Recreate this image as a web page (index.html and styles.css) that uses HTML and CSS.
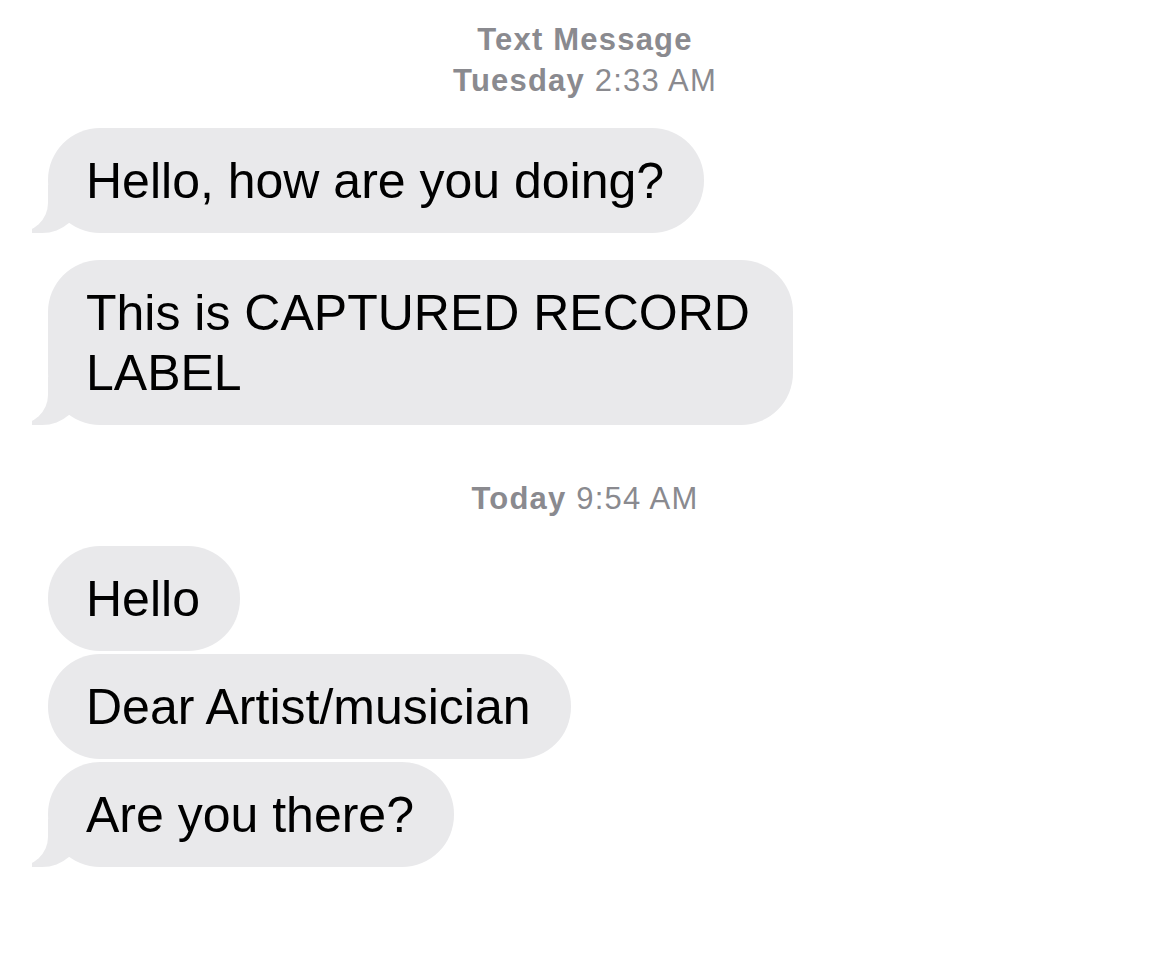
FILE: index.html
```html
<!DOCTYPE html>
<html lang="en">
<head>
    <meta charset="UTF-8">
    <meta name="viewport" content="width=device-width, initial-scale=1.0">
    <title>Text Message</title>
    <link rel="stylesheet" href="styles.css">
</head>
<body>
    <div class="thread">
        <div class="stamp">
            <div class="stamp-title">Text Message</div>
            <div><b>Tuesday</b> 2:33 AM</div>
        </div>

        <div class="group">
            <div class="bubble tail">Hello, how are you doing?</div>
        </div>
        <div class="group">
            <div class="bubble tail">This is CAPTURED RECORD LABEL</div>
        </div>

        <div class="stamp stamp-today">
            <div><b>Today</b> 9:54 AM</div>
        </div>

        <div class="group">
            <div class="bubble">Hello</div>
            <div class="bubble">Dear Artist/musician</div>
            <div class="bubble tail">Are you there?</div>
        </div>
    </div>
</body>
</html>
```

FILE: styles.css
```css
body {
    margin: 0;
    background-color: #fff;
    font-family: "Liberation Sans", Arial, sans-serif;
    color: #000;
}
.thread {
    padding: 19px 0 60px 48px;
}
.stamp {
    text-align: center;
    margin-left: -48px;
    font-size: 31px;
    line-height: 41px;
    letter-spacing: 1.2px;
    color: #8a8a8f;
}
.stamp b,
.stamp-title {
    font-weight: bold;
}
.stamp-today {
    margin-top: 53px;
}
.group {
    display: flex;
    flex-direction: column;
    align-items: flex-start;
    gap: 3px;
    margin-top: 27px;
}
.bubble {
    position: relative;
    box-sizing: border-box;
    max-width: 745px;
    padding: 23px 40px 22px 38px;
    background-color: #e9e9eb;
    border-radius: 52px;
    font-size: 50px;
    line-height: 60px;
}
.bubble.tail::before {
    content: "";
    position: absolute;
    left: -16px;
    bottom: 0;
    width: 48px;
    height: 48px;
    background-color: #e9e9eb;
    border-bottom-right-radius: 38px 34px;
}
.bubble.tail::after {
    content: "";
    position: absolute;
    left: -62px;
    bottom: 0;
    width: 62px;
    height: 48px;
    background-color: #fff;
    border-bottom-right-radius: 32px 30px;
}
```
